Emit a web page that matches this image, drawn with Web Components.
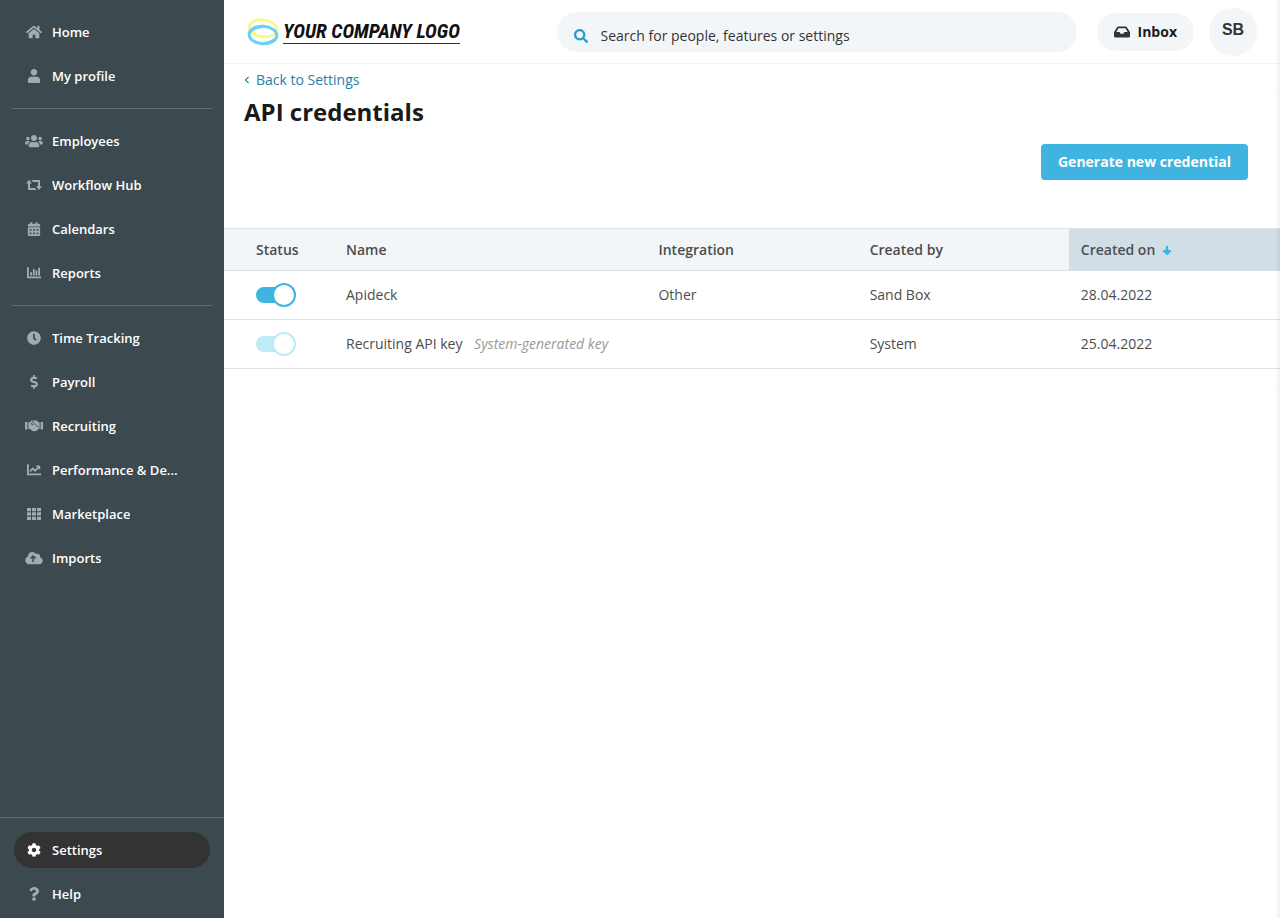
<!DOCTYPE html>
<html lang="en">
<head>
<meta charset="utf-8">
<meta name="viewport" content="width=device-width, initial-scale=1">
<title>API credentials</title>
<style>
  body {
    margin: 0;
    font: 14px/20px "Open Sans", "Noto Sans", sans-serif;
    color: #4d4d4d;
    background: #fff;
  }
</style>
</head>
<body>
<app-shell>
  <side-nav slot="nav">
    <nav-group>
      <nav-item icon="home">Home</nav-item>
      <nav-item icon="user">My profile</nav-item>
    </nav-group>
    <nav-group>
      <nav-item icon="users">Employees</nav-item>
      <nav-item icon="flow">Workflow Hub</nav-item>
      <nav-item icon="calendar">Calendars</nav-item>
      <nav-item icon="bars">Reports</nav-item>
    </nav-group>
    <nav-group>
      <nav-item icon="clock">Time Tracking</nav-item>
      <nav-item icon="dollar">Payroll</nav-item>
      <nav-item icon="handshake">Recruiting</nav-item>
      <nav-item icon="line">Performance &amp; De...</nav-item>
      <nav-item icon="grid">Marketplace</nav-item>
      <nav-item icon="cloud">Imports</nav-item>
    </nav-group>
    <nav-item slot="footer" icon="cog" current>Settings</nav-item>
    <nav-item slot="footer" icon="question">Help</nav-item>
  </side-nav>
  <top-bar slot="top"></top-bar>
  <page-heading back="Back to Settings">
    API credentials
    <action-button slot="action">Generate new credential</action-button>
  </page-heading>
  <credentials-table></credentials-table>
</app-shell>

<script>
const ICONS = {
  home: [16, 14, '0 32 576 448', '<path d="M280.37 148.26L96 300.11V464a16 16 0 0 0 16 16l112.06-.29a16 16 0 0 0 15.92-16V368a16 16 0 0 1 16-16h64a16 16 0 0 1 16 16v95.64a16 16 0 0 0 16 16.05L464 480a16 16 0 0 0 16-16V300L295.67 148.26a12.19 12.19 0 0 0-15.3 0zM571.6 251.47L488 182.56V44.05a12 12 0 0 0-12-12h-56a12 12 0 0 0-12 12v72.61L318.47 43a48 48 0 0 0-61 0L4.34 251.47a12 12 0 0 0-1.6 16.9l25.5 31A12 12 0 0 0 45.15 301l235.22-193.74a12.19 12.19 0 0 1 15.3 0L530.9 301a12 12 0 0 0 16.9-1.6l25.5-31a12 12 0 0 0-1.7-16.93z"/>'],
  user: [14, 14, '0 0 448 512', '<path d="M224 240c66 0 120-54 120-120S290 0 224 0 104 54 104 120s54 120 120 120zM120 280C54 280 0 340 0 410v54c0 26 22 48 48 48h352c26 0 48-22 48-48v-54c0-70-54-130-120-130z"/>'],
  users: [18, 14, '0 0 640 512', '<path d="M96 224c35.3 0 64-28.7 64-64s-28.7-64-64-64-64 28.7-64 64 28.7 64 64 64zm448 0c35.3 0 64-28.7 64-64s-28.7-64-64-64-64 28.7-64 64 28.7 64 64 64zm32 32h-64c-17.6 0-33.5 7.1-45.1 18.6 40.3 22.1 68.9 62 75.1 109.4h66c17.7 0 32-14.3 32-32v-32c0-35.3-28.7-64-64-64zm-256 0c61.9 0 112-50.1 112-112S381.9 32 320 32 208 82.1 208 144s50.1 112 112 112zm76.8 32h-8.3c-20.8 10-43.9 16-68.5 16s-47.6-6-68.5-16h-8.3C179.6 288 128 339.6 128 403.2V432c0 26.5 21.5 48 48 48h288c26.5 0 48-21.5 48-48v-28.8c0-63.6-51.6-115.2-115.2-115.2zm-223.7-13.4C161.5 263.1 145.6 256 128 256H64c-35.3 0-64 28.7-64 64v32c0 17.7 14.3 32 32 32h65.9c6.3-47.4 34.9-87.3 75.2-109.4z"/>'],
  flow: [16, 12, '0 0 16 12', '<path d="M2 4.500V11H10.500L9 9H4V4.500H6L3 .800 0 4.500zM14 7.300V1H5.500L7 3H12V7.300H10L13 11 16 7.300z"/>'],
  calendar: [14, 14, '0 0 448 512', '<path d="M0 464c0 26.500 21.500 48 48 48h352c26.500 0 48-21.500 48-48V192H0v272zm320-196c0-6.600 5.400-12 12-12h40c6.600 0 12 5.400 12 12v40c0 6.600-5.400 12-12 12h-40c-6.600 0-12-5.400-12-12v-40zm0 128c0-6.600 5.400-12 12-12h40c6.600 0 12 5.400 12 12v40c0 6.600-5.400 12-12 12h-40c-6.600 0-12-5.400-12-12v-40zM192 268c0-6.600 5.400-12 12-12h40c6.600 0 12 5.400 12 12v40c0 6.600-5.400 12-12 12h-40c-6.600 0-12-5.400-12-12v-40zm0 128c0-6.600 5.400-12 12-12h40c6.600 0 12 5.400 12 12v40c0 6.600-5.400 12-12 12h-40c-6.600 0-12-5.400-12-12v-40zM64 268c0-6.600 5.400-12 12-12h40c6.600 0 12 5.400 12 12v40c0 6.600-5.400 12-12 12H76c-6.600 0-12-5.400-12-12v-40zm0 128c0-6.600 5.400-12 12-12h40c6.600 0 12 5.400 12 12v40c0 6.600-5.400 12-12 12H76c-6.600 0-12-5.400-12-12v-40zM400 64h-48V16c0-8.800-7.200-16-16-16h-32c-8.800 0-16 7.200-16 16v48H160V16c0-8.800-7.200-16-16-16h-32c-8.800 0-16 7.200-16 16v48H48C21.500 64 0 85.500 0 112v48h448v-48c0-26.500-21.500-48-48-48z"/>'],
  bars: [14, 12, '0 0 14 12', '<path d="M0 .3h1.800v9.100H14v1.800H0zM3.200 5.200h1.800v3.200H3.200zM5.900 2h1.800v6.400H5.900zM8.500 3.500h1.800v4.900H8.500zM11.200.800H13v7.600h-1.800z"/>'],
  clock: [14, 14, '0 0 512 512', '<path d="M256,8C119,8,8,119,8,256S119,504,256,504,504,393,504,256,393,8,256,8Zm92.490,313h0l-20,25a16,16,0,0,1-22.490,2.500h0l-67-49.720a40,40,0,0,1-15-31.230V112a16,16,0,0,1,16-16h32a16,16,0,0,1,16,16V256l58,42.500A16,16,0,0,1,348.490,321Z"/>'],
  dollar: [14, 14, '0 0 288 512', '<path d="M209.200 233.400l-108-31.600C88.700 198.200 80 186.500 80 173.500c0-16.300 13.200-29.500 29.500-29.500h66.300c12.200 0 24.200 3.700 34.200 10.500 6.100 4.100 14.300 3.100 19.500-2l34.800-34c7.100-6.900 6.100-18.400-1.800-24.500C238 74.800 207.400 64.100 176 64V16c0-8.800-7.200-16-16-16h-32c-8.800 0-16 7.200-16 16v48h-2.500C45.800 64-5.400 118.700.500 183.600c4.200 46.100 39.400 83.600 83.800 96.600l102.500 30c12.500 3.700 21.200 15.300 21.200 28.300 0 16.300-13.200 29.500-29.500 29.500h-66.300C100 368 88 364.300 78 357.500c-6.100-4.100-14.300-3.100-19.500 2l-34.800 34c-7.100 6.900-6.100 18.400 1.800 24.500 24.500 19.200 55.100 29.900 86.500 30v48c0 8.800 7.200 16 16 16h32c8.800 0 16-7.200 16-16v-48.200c46.600-.900 90.300-28.600 105.700-72.700 21.500-61.600-14.600-124.800-72.500-141.700z"/>'],
  handshake: [18, 12, '0 0 18 12', '<path d="M0 2h2.400v7.600H0zM15.600 2H18v7.600h-2.400zM3.400 2.200h1.400L6.600.6h5.200l1.600 1.600h1.200v6.400l-1 .4-1.600 1.500-1.400.5-1.400.2-1.600-.3L5 8.900H3.400z"/><path d="M8.800.9 6.400 3.500c-.3 1.300 1 1.700 1.900.8l1.200-1 3.800 3.900" fill="none" stroke="#3c4a4f" stroke-width="1"/>'],
  line: [14, 12, '0 0 14 12', '<path d="M0 .3h1.800v9.100H14v1.800H0z"/><path d="M3 7.500 5.700 4.500 8.100 6.700 11.500 3.300" fill="none" stroke="currentColor" stroke-width="1.800"/><path d="M8.600 1.400h4.600V6z"/>'],
  grid: [14, 12, '0 0 14 12', '<path d="M0 0h4v3.300H0zM5 0h4v3.300H5zM10 0h4v3.300h-4zM0 4.300h4v3.300H0zM5 4.300h4v3.300H5zM10 4.300h4v3.300h-4zM0 8.700h4V12H0zM5 8.700h4V12H5zM10 8.700h4V12h-4z"/>'],
  cloud: [18, 14, '0 0 640 512', '<path d="M537.600 226.600c4.100-10.700 6.400-22.400 6.400-34.600 0-53-43-96-96-96-19.700 0-38.100 6-53.300 16.200C367 64.200 315.300 32 256 32c-88.400 0-160 71.600-160 160 0 2.700.1 5.400.2 8.100C40.200 219.800 0 273.200 0 336c0 79.500 64.500 144 144 144h368c70.700 0 128-57.300 128-128 0-61.900-44-113.600-102.400-125.400z"/><path d="M288 405V190M195 275l93-93 93 93" fill="none" stroke="#3c4a4f" stroke-width="56"/>'],
  cog: [14, 14, '0 0 512 512', '<path d="M487.400 315.700l-42.600-24.600c4.300-23.200 4.300-47 0-70.200l42.600-24.600c4.900-2.800 7.100-8.600 5.500-14-11.100-35.600-30-67.800-54.700-94.600-3.800-4.100-10-5.100-14.800-2.300L380.800 110c-17.900-15.400-38.500-27.300-60.800-35.100V25.800c0-5.600-3.900-10.500-9.400-11.700-36.700-8.200-74.300-7.800-109.200 0-5.500 1.200-9.400 6.100-9.400 11.700V75c-22.200 7.900-42.800 19.800-60.800 35.100L88.700 85.500c-4.900-2.800-11-1.900-14.800 2.300-24.700 26.700-43.600 58.900-54.700 94.600-1.700 5.400.6 11.200 5.500 14L67.300 221c-4.300 23.200-4.300 47 0 70.200l-42.600 24.600c-4.900 2.800-7.100 8.600-5.500 14 11.100 35.600 30 67.800 54.700 94.600 3.800 4.100 10 5.100 14.800 2.300l42.600-24.600c17.900 15.400 38.500 27.300 60.800 35.100v49.200c0 5.600 3.900 10.500 9.400 11.700 36.700 8.200 74.300 7.800 109.200 0 5.500-1.200 9.400-6.100 9.400-11.700v-49.200c22.200-7.900 42.800-19.800 60.800-35.100l42.600 24.600c4.900 2.800 11 1.900 14.800-2.300 24.700-26.700 43.600-58.900 54.700-94.600 1.500-5.500-.7-11.300-5.600-14.100zM256 336c-44.100 0-80-35.900-80-80s35.900-80 80-80 80 35.900 80 80-35.900 80-80 80z"/>'],
  question: [14, 14, '0 0 384 512', '<path d="M202 0C122.200 0 70.500 32.700 29.900 91c-7.400 10.600-5.100 25.100 5.200 32.900l43.100 32.700c10.400 7.900 25.100 6 33.300-4.100 25-31.400 43.600-49.500 82.700-49.500 30.800 0 68.800 19.800 68.800 49.600 0 22.600-18.600 34.100-49 51.200-35.400 19.900-82.300 44.600-82.300 106.400V320c0 13.300 10.700 24 24 24h72.500c13.300 0 24-10.700 24-24v-5.800c0-42.900 125.300-44.600 125.300-160.600C377.500 66.300 286.900 0 202 0zM192 373.500c-38.200 0-69.300 31-69.300 69.200S153.800 512 192 512s69.300-31.100 69.300-69.300-31.100-69.200-69.300-69.200z"/>'],
  search: [14, 14, '0 0 512 512', '<path d="M505 442.700L405.300 343c-4.500-4.500-10.600-7-17-7H372c27.600-35.300 44-79.700 44-128C416 93.100 322.900 0 208 0S0 93.100 0 208s93.100 208 208 208c48.300 0 92.700-16.400 128-44v16.300c0 6.400 2.500 12.500 7 17l99.700 99.700c9.400 9.400 24.600 9.400 33.900 0l28.300-28.300c9.400-9.400 9.400-24.600.1-34zM208 336c-70.700 0-128-57.200-128-128 0-70.700 57.200-128 128-128 70.700 0 128 57.200 128 128 0 70.700-57.200 128-128 128z"/>'],
  inbox: [16, 12, '0 0 16 12', '<path fill-rule="evenodd" d="M4.300.600h7.400q.8 0 1.200.6L15.600 5.600q.4.500.4 1V10q0 1.500-1.500 1.500h-13Q0 11.500 0 10V6.600q0-.5.400-1L3.100 1.200Q3.500.6 4.300.6zM4.500 2.300 2.400 5.900h3.200l1 1.900h2.800l1-1.900h3.200L11.500 2.300z"/>'],
  back: [6, 8, '0 0 6 8', '<path d="M4.600.800 1.500 4l3.100 3.200" fill="none" stroke="currentColor" stroke-width="1.200"/>'],
  down: [8, 9, '0 0 8 9', '<path d="M2.800 0h2.400v4H8v1.400L4.800 8.800H3.200L0 5.400V4h2.800z"/>']
};

function define(name, template, setup) {
  const tpl = document.createElement('template');
  tpl.innerHTML = template;
  customElements.define(name, class extends HTMLElement {
    constructor() {
      super();
      this.attachShadow({ mode: 'open' }).append(tpl.content.cloneNode(true));
    }
    connectedCallback() {
      if (setup) setup(this, this.shadowRoot);
    }
  });
}

define('app-icon', `
  <style>
    :host { display: inline-flex; flex: none; }
    svg { display: block; fill: currentColor; }
  </style>
  <svg aria-hidden="true"></svg>`, (host, root) => {
  const [w, h, box, shape] = ICONS[host.getAttribute('name')];
  const svg = root.querySelector('svg');
  svg.setAttribute('width', w);
  svg.setAttribute('height', h);
  svg.setAttribute('viewBox', box);
  svg.innerHTML = shape;
});

define('nav-item', `
  <style>
    :host { display: block; }
    a {
      display: flex; align-items: center; gap: 8px;
      height: 36px; padding: 0 10px; border-radius: 18px;
      color: #fff; font-size: 13px; font-weight: 600; text-decoration: none;
    }
    .icon { display: flex; justify-content: center; width: 20px; color: #a3abac; }
    .label { overflow: hidden; white-space: nowrap; text-overflow: ellipsis; }
    :host([current]) a { background: #333; }
    :host([current]) .icon { color: #fff; }
  </style>
  <a href="#"><span class="icon"></span><span class="label"><slot></slot></span></a>`, (host, root) => {
  const icon = document.createElement('app-icon');
  icon.setAttribute('name', host.getAttribute('icon'));
  root.querySelector('.icon').replaceChildren(icon);
  if (host.hasAttribute('current')) root.querySelector('a').setAttribute('aria-current', 'page');
});

define('nav-group', `
  <style>
    :host { display: flex; flex-direction: column; gap: 8px; margin: 0 12px; padding: 14px 2px; }
    :host(:not(:first-child)) { border-top: 1px solid #5f6c70; }
  </style>
  <slot></slot>`);

define('side-nav', `
  <style>
    :host { display: block; background: #3c4a4f; }
    nav { display: flex; flex-direction: column; height: 100vh; position: sticky; top: 0; }
    .groups { flex: 1; min-height: 0; overflow: hidden; }
    .footer {
      display: flex; flex-direction: column; gap: 8px;
      padding: 14px 14px 6px; border-top: 1px solid #5f6c70;
    }
  </style>
  <nav aria-label="Main">
    <div class="groups"><slot></slot></div>
    <div class="footer"><slot name="footer"></slot></div>
  </nav>`);

define('company-logo', `
  <style>
    :host { display: block; }
    a { display: flex; align-items: center; gap: 4px; color: #111; text-decoration: none; }
    svg { flex: none; }
    span {
      border-bottom: 1px solid #333;
      font: italic 700 20px/24px "Liberation Sans Narrow", "Roboto Condensed", "Liberation Sans", sans-serif;
      white-space: nowrap;
    }
  </style>
  <a href="#">
    <svg width="32" height="28" viewBox="0 0 32 28" fill="none" aria-hidden="true">
      <g stroke="#fdf68a">
        <ellipse cx="16" cy="10.500" rx="14" ry="8.500" stroke-width="2.600" transform="rotate(6 16 10.500)"/>
        <ellipse cx="16.500" cy="10" rx="13.500" ry="8.500" stroke-width="2" transform="rotate(12 16.500 10)"/>
      </g>
      <g stroke="#6ad2f5">
        <ellipse cx="16" cy="17" rx="14" ry="8.800" stroke-width="2.800" transform="rotate(5 16 17)"/>
        <ellipse cx="16" cy="17" rx="14" ry="8" stroke-width="1.800" transform="rotate(-5 16 17)"/>
      </g>
    </svg>
    <span>YOUR COMPANY LOGO</span>
  </a>`);

define('search-box', `
  <style>
    :host { display: block; }
    label {
      display: flex; align-items: center; gap: 13px; box-sizing: border-box;
      height: 40px; padding: 8px 17px 0; border-radius: 20px;
      background: #f3f6f9; color: #2a9bc4;
    }
    input {
      flex: 1; min-width: 0; padding: 0; border: 0; outline: 0; background: none;
      font: inherit; color: #333;
    }
    input::placeholder { color: #333; opacity: 1; }
  </style>
  <label>
    <app-icon name="search"></app-icon>
    <input type="search" aria-label="Search" placeholder="Search for people, features or settings">
  </label>`);

define('top-bar', `
  <style>
    :host {
      display: flex; align-items: center; box-sizing: border-box;
      height: 64px; padding: 0 23px; border-bottom: 1px solid #f1f3f4;
    }
    search-box { flex: 0 1 520px; margin-left: auto; }
    button { flex: none; border: 0; background: #f3f6f9; font: inherit; font-weight: 700; color: #1a1a1a; }
    .inbox {
      display: flex; align-items: center; gap: 8px;
      height: 38px; margin-left: 20px; padding: 0 17px; border-radius: 19px;
    }
    .inbox app-icon { color: #333; }
    .avatar {
      width: 48px; height: 48px; margin-left: 15px; padding: 0 0 4px; border-radius: 50%;
      font-family: "Liberation Sans", Arial, sans-serif; font-size: 16px; color: #333;
    }
  </style>
  <company-logo></company-logo>
  <search-box></search-box>
  <button class="inbox"><app-icon name="inbox"></app-icon>Inbox</button>
  <button class="avatar">SB</button>`);

define('action-button', `
  <style>
    :host { display: block; }
    button {
      height: 36px; padding: 0 17px; border: 0; border-radius: 4px;
      background: #3fb4e0; color: #fff; font: inherit; font-weight: 700;
    }
  </style>
  <button><slot></slot></button>`);

define('page-heading', `
  <style>
    :host { display: block; padding: 0 20px; }
    .crumb {
      display: flex; align-items: center; height: 31px;
      margin: 0 -20px; padding: 0 20px; border-bottom: 1px solid #fafbfb;
    }
    a { display: flex; align-items: center; gap: 6px; color: #1f81a5; text-decoration: none; }
    h1 { margin: 0; font-size: 24px; line-height: 32px; font-weight: 700; color: #1a1a1a; }
    .actions { display: flex; justify-content: flex-end; padding: 16px 12px 48px; }
  </style>
  <div class="crumb"><a href="#"><app-icon name="back"></app-icon><span></span></a></div>
  <h1><slot></slot></h1>
  <div class="actions"><slot name="action"></slot></div>`, (host, root) => {
  root.querySelector('a span').textContent = host.getAttribute('back');
});

define('toggle-switch', `
  <style>
    :host { display: block; }
    input {
      appearance: none; display: block; position: relative; box-sizing: border-box;
      width: 40px; height: 24px; margin: 0; color: #3fb4e0;
    }
    input::before {
      content: ""; position: absolute; inset: 4px 8px 4px 0;
      border-radius: 8px; background: currentColor;
    }
    input::after {
      content: ""; position: absolute; top: 0; right: 0; box-sizing: border-box;
      width: 24px; height: 24px; border: 2px solid currentColor; border-radius: 50%; background: #fff;
    }
    input:not(:checked)::after { right: 16px; }
    input:disabled { color: #bfeaf7; }
  </style>
  <input type="checkbox" role="switch" checked>`, (host, root) => {
  const input = root.querySelector('input');
  input.disabled = host.hasAttribute('disabled');
  input.setAttribute('aria-label', host.getAttribute('label'));
});

define('credentials-table', `
  <style>
    :host { display: block; padding-bottom: 20px; border-bottom: 1px solid #fafbfb; }
    table { width: 100%; border-collapse: separate; border-spacing: 0; table-layout: fixed; }
    th, td { box-sizing: border-box; padding: 0 12px; border-bottom: 1px solid #d9e3ea; text-align: left; }
    th { height: 43px; border-top: 1px solid #d9e3ea; background: #f3f6f9; font-weight: 600; }
    td { height: 49px; white-space: nowrap; }
    th:first-child, td:first-child { padding-left: 32px; }
    .status { width: 110px; }
    .fifth { width: 20%; }
    .sorted { background: #d2dee6; }
    .sorted app-icon { margin-left: 4px; color: #3fb4e0; }
    i { margin-left: 8px; color: #999; }
  </style>
  <table>
    <thead>
      <tr>
        <th class="status">Status</th>
        <th>Name</th>
        <th class="fifth">Integration</th>
        <th class="fifth">Created by</th>
        <th class="fifth sorted" aria-sort="descending">Created on <app-icon name="down"></app-icon></th>
      </tr>
    </thead>
    <tbody>
      <tr>
        <td><toggle-switch label="Apideck"></toggle-switch></td>
        <td>Apideck</td><td>Other</td><td>Sand Box</td><td>28.04.2022</td>
      </tr>
      <tr>
        <td><toggle-switch label="Recruiting API key" disabled></toggle-switch></td>
        <td>Recruiting API key <i>System-generated key</i></td><td></td><td>System</td><td>25.04.2022</td>
      </tr>
    </tbody>
  </table>`);

define('app-shell', `
  <style>
    :host { display: grid; grid-template-columns: 224px minmax(0, 1fr); min-height: 100vh; position: relative; }
    :host::after {
      content: ""; position: absolute; top: 0; right: 0; bottom: 0; width: 5px;
      background: linear-gradient(to right, rgba(0, 0, 0, 0), rgba(0, 0, 0, .06));
      pointer-events: none;
    }
    .page { display: flex; flex-direction: column; }
  </style>
  <slot name="nav"></slot>
  <div class="page">
    <header><slot name="top"></slot></header>
    <main><slot></slot></main>
  </div>`);
</script>
</body>
</html>
